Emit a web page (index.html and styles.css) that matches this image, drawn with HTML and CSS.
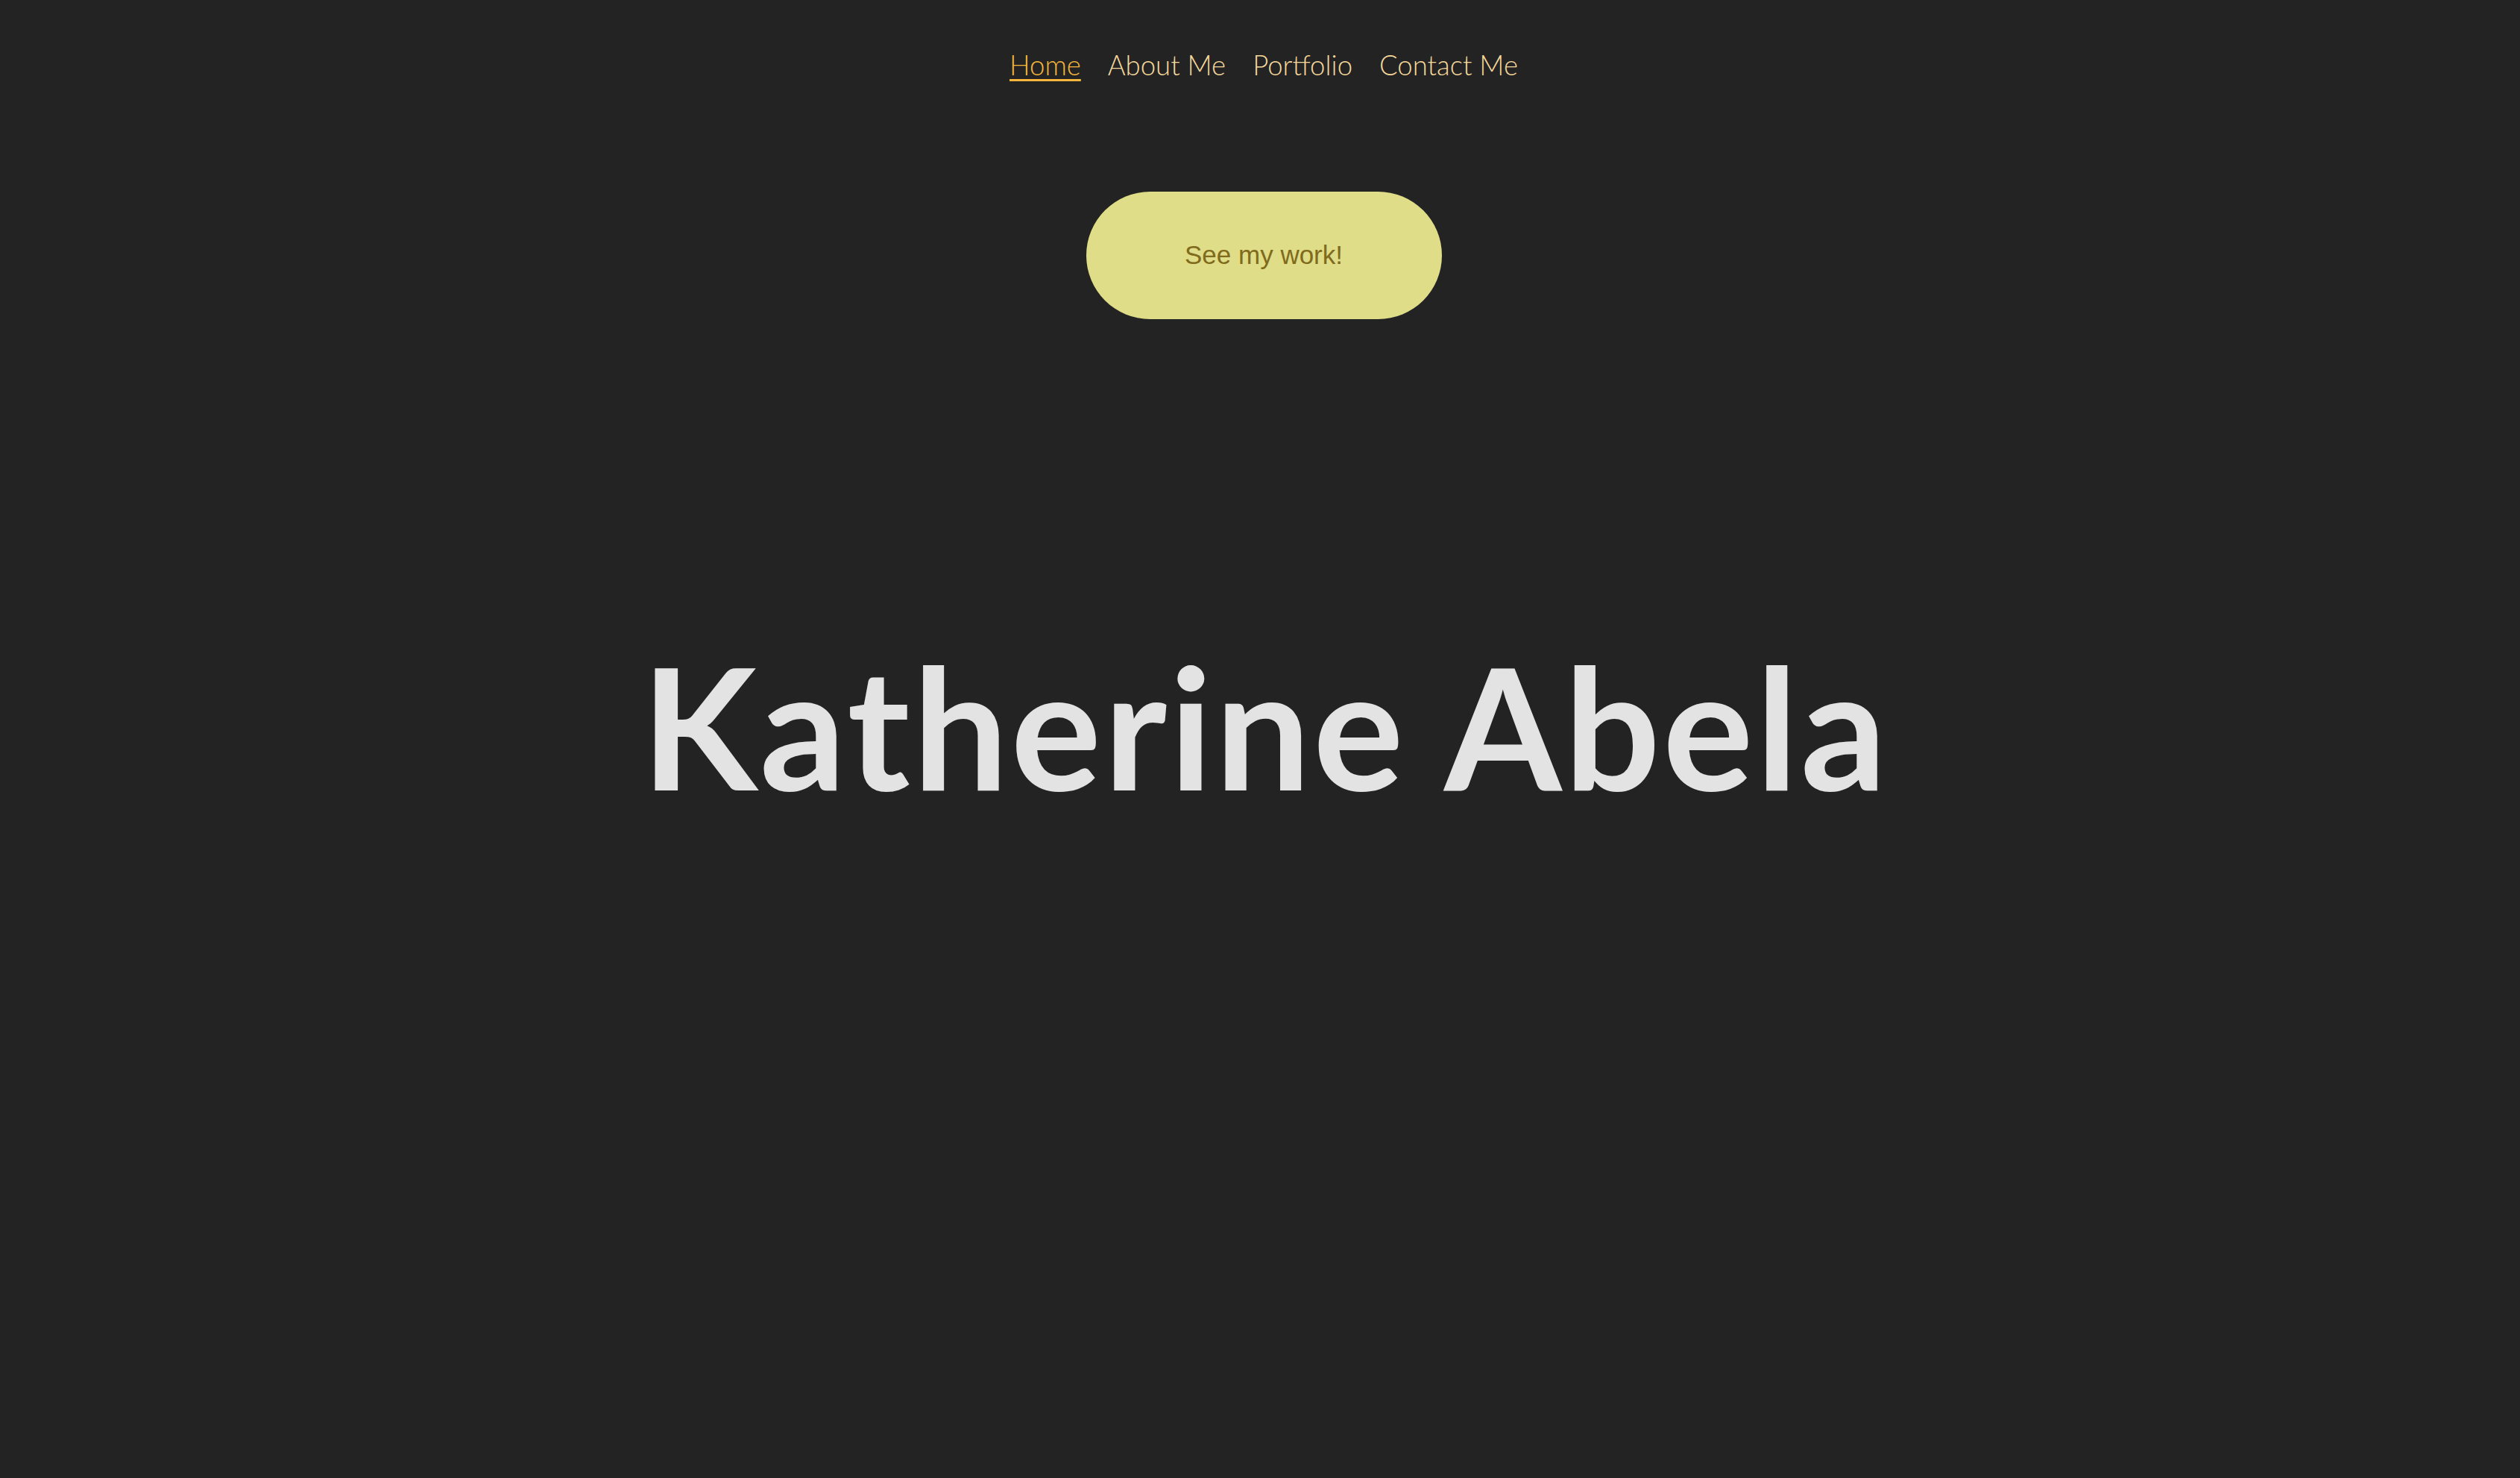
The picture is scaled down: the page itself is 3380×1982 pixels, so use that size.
FILE: index.html
```html
<!DOCTYPE html>
<html lang="en">
<head>
<meta charset="utf-8">
<title>Katherine Abela</title>
<link rel="stylesheet" href="styles.css">
</head>
<body>
<div class="page">
  <nav class="nav">
    <a class="nav-link active" href="#">Home</a>
    <a class="nav-link" href="#">About Me</a>
    <a class="nav-link" href="#">Portfolio</a>
    <a class="nav-link" href="#">Contact Me</a>
  </nav>
  <a class="cta" href="#">See my work!</a>
  <h1 class="title">Katherine Abela</h1>
</div>
</body>
</html>
```

FILE: styles.css
```css
html, body {
  margin: 0;
  padding: 0;
  background: #232323;
}
.page {
  width: 3380px;
  height: 1982px;
  box-sizing: border-box;
  padding-left: 10px;
  display: flex;
  flex-direction: column;
  align-items: center;
  background: #232323;
}
.nav {
  display: flex;
  gap: 36px;
  padding-top: 66px;
  font-family: "Lato", "Noto Sans", sans-serif;
  font-weight: 300;
  font-size: 36.5px;
  line-height: 1.2;
}
.nav-link {
  color: #f5d89b;
  text-decoration: none;
}
.nav-link.active {
  color: #f6b63c;
  text-decoration: underline;
  text-decoration-thickness: 3px;
  text-underline-offset: 5px;
}
.cta {
  margin-top: 147px;
  width: 477px;
  height: 171px;
  border-radius: 86px;
  background: #dfdd87;
  color: #806a1c;
  display: flex;
  align-items: center;
  justify-content: center;
  font-family: "Liberation Sans", Arial, sans-serif;
  font-size: 35px;
  text-decoration: none;
}
.title {
  margin: 431px 0 0 0;
  padding-left: 4px;
  font-family: "Lato", "Noto Sans", sans-serif;
  font-weight: 700;
  font-size: 227px;
  letter-spacing: 3.5px;
  line-height: 1;
  color: #e3e3e3;
  white-space: nowrap;
}
```
